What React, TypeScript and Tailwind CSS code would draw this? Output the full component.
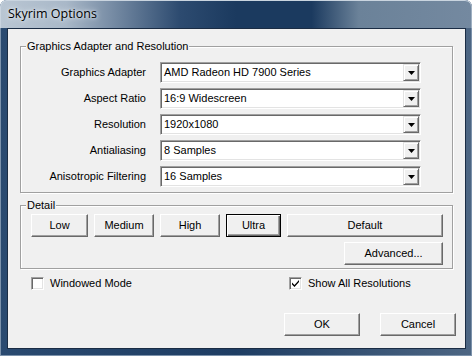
import { ReactNode } from "react";

const font = "font-['Liberation_Sans',Arial,sans-serif] text-[11px] text-black";

function GroupBox({
  title,
  className = "",
  children,
}: {
  title: string;
  className?: string;
  children: ReactNode;
}) {
  return (
    <div
      className={`relative mx-[12px] border border-[#a0a0a0] shadow-[inset_1px_1px_0_#fff,1px_1px_0_#fff] ${className}`}
    >
      <span className="absolute left-[5px] top-[-8px] bg-[#f0f0f0] px-[1px] leading-[14px]">
        {title}
      </span>
      {children}
    </div>
  );
}

function Combo({ value }: { value: string }) {
  return (
    <div className="flex h-[21px] w-[261px] border border-t-[#a0a0a0] border-l-[#a0a0a0] border-r-white border-b-white">
      <div className="flex flex-1 items-center bg-white pl-[3px] shadow-[inset_1px_1px_0_#696969,inset_-1px_-1px_0_#e3e3e3]">
        <span className="flex-1 leading-none">{value}</span>
        <div className="mr-px mt-px flex h-[17px] w-[16px] items-center justify-center self-start border border-t-[#e3e3e3] border-l-[#e3e3e3] border-r-[#696969] border-b-[#696969] bg-[#f0f0f0] shadow-[inset_1px_1px_0_#fff,inset_-1px_-1px_0_#a0a0a0]">
          <svg width="7" height="4" viewBox="0 0 7 4">
            <path d="M0 0h7L3.5 4z" fill="#000" />
          </svg>
        </div>
      </div>
    </div>
  );
}

function Button({
  label,
  w,
  active = false,
}: {
  label: string;
  w: string;
  active?: boolean;
}) {
  const frame = active
    ? "border-black shadow-[inset_1px_1px_0_#fff,inset_-1px_-1px_0_#696969,inset_-2px_-2px_0_#a0a0a0]"
    : "border-t-white border-l-white border-r-[#696969] border-b-[#696969] shadow-[inset_-1px_-1px_0_#a0a0a0]";
  return (
    <div
      className={`flex h-[23px] ${w} items-center justify-center border bg-[#f0f0f0] ${frame}`}
    >
      {label}
    </div>
  );
}

function Check({ label, checked = false }: { label: string; checked?: boolean }) {
  return (
    <div className="flex h-[13px] items-center gap-[6px]">
      <div className="flex h-[13px] w-[13px] items-center justify-center border border-t-[#a0a0a0] border-l-[#a0a0a0] border-r-white border-b-white bg-white shadow-[inset_1px_1px_0_#696969,inset_-1px_-1px_0_#e3e3e3]">
        {checked && (
          <svg width="7" height="7" viewBox="0 0 7 7">
            <path d="M0 2.5l2.5 2.5L7 0v2L2.5 7 0 4.5z" fill="#000" />
          </svg>
        )}
      </div>
      <span className="leading-[13px]">{label}</span>
    </div>
  );
}

const rows = [
  ["Graphics Adapter", "AMD Radeon HD 7900 Series"],
  ["Aspect Ratio", "16:9 Widescreen"],
  ["Resolution", "1920x1080"],
  ["Antialiasing", "8 Samples"],
  ["Anisotropic Filtering", "16 Samples"],
];

export default function App() {
  return (
    <div className="flex h-[356px] w-[472px] flex-col overflow-hidden rounded-t-[7px] bg-[linear-gradient(90deg,#2a4a70_0%,#1e3d63_50%,#4d6683_100%)] shadow-[inset_0_0_0_1px_#7c92ab]">
      <div className="flex h-[28px] shrink-0 items-center rounded-t-[7px] bg-[linear-gradient(90deg,#b9c6d3_0%,#a9b8c8_14%,#2d4b70_38%,#1b3a5f_50%,#1b3a5f_66%,#6b8299_76%,#7489a0_100%)] pl-[8px] shadow-[inset_0_1px_0_#c9d4df,inset_1px_0_0_#c9d4df,inset_-1px_0_0_#9fb0c2]">
        <span className="font-['Open_Sans',sans-serif] text-[12.5px] text-black [text-shadow:0_0_6px_#e8eef4,0_0_3px_#e8eef4]">
          Skyrim Options
        </span>
      </div>
      <div className="flex flex-1 px-[7px] pb-[7px]">
        <div className={`flex flex-1 flex-col border border-[#1a2c44] bg-[#f0f0f0] ${font}`}>
          <GroupBox title="Graphics Adapter and Resolution" className="mt-[17px] h-[147px]">
            <div className="flex flex-col gap-[5px] pt-[15px]">
              {rows.map(([label, value]) => (
                <div key={label} className="flex items-center gap-[14px]">
                  <span className="w-[125px] text-right">{label}</span>
                  <Combo value={value} />
                </div>
              ))}
            </div>
          </GroupBox>
          <GroupBox title="Detail" className="mt-[12px] h-[64px]">
            <div className="flex flex-col items-end gap-[5px] pl-[10px] pr-[9px] pt-[8px]">
              <div className="flex gap-[6px] self-start">
                <Button label="Low" w="w-[57px]" />
                <Button label="Medium" w="w-[60px]" />
                <Button label="High" w="w-[60px]" />
                <Button label="Ultra" w="w-[55px]" active />
                <Button label="Default" w="w-[156px]" />
              </div>
              <Button label="Advanced..." w="w-[99px]" />
            </div>
          </GroupBox>
          <div className="mt-[8px] flex pl-[23px]">
            <div className="w-[258px]">
              <Check label="Windowed Mode" />
            </div>
            <Check label="Show All Resolutions" checked />
          </div>
          <div className="mt-[23px] flex justify-end gap-[20px] pr-[9px]">
            <Button label="OK" w="w-[76px]" />
            <Button label="Cancel" w="w-[76px]" />
          </div>
        </div>
      </div>
    </div>
  );
}
